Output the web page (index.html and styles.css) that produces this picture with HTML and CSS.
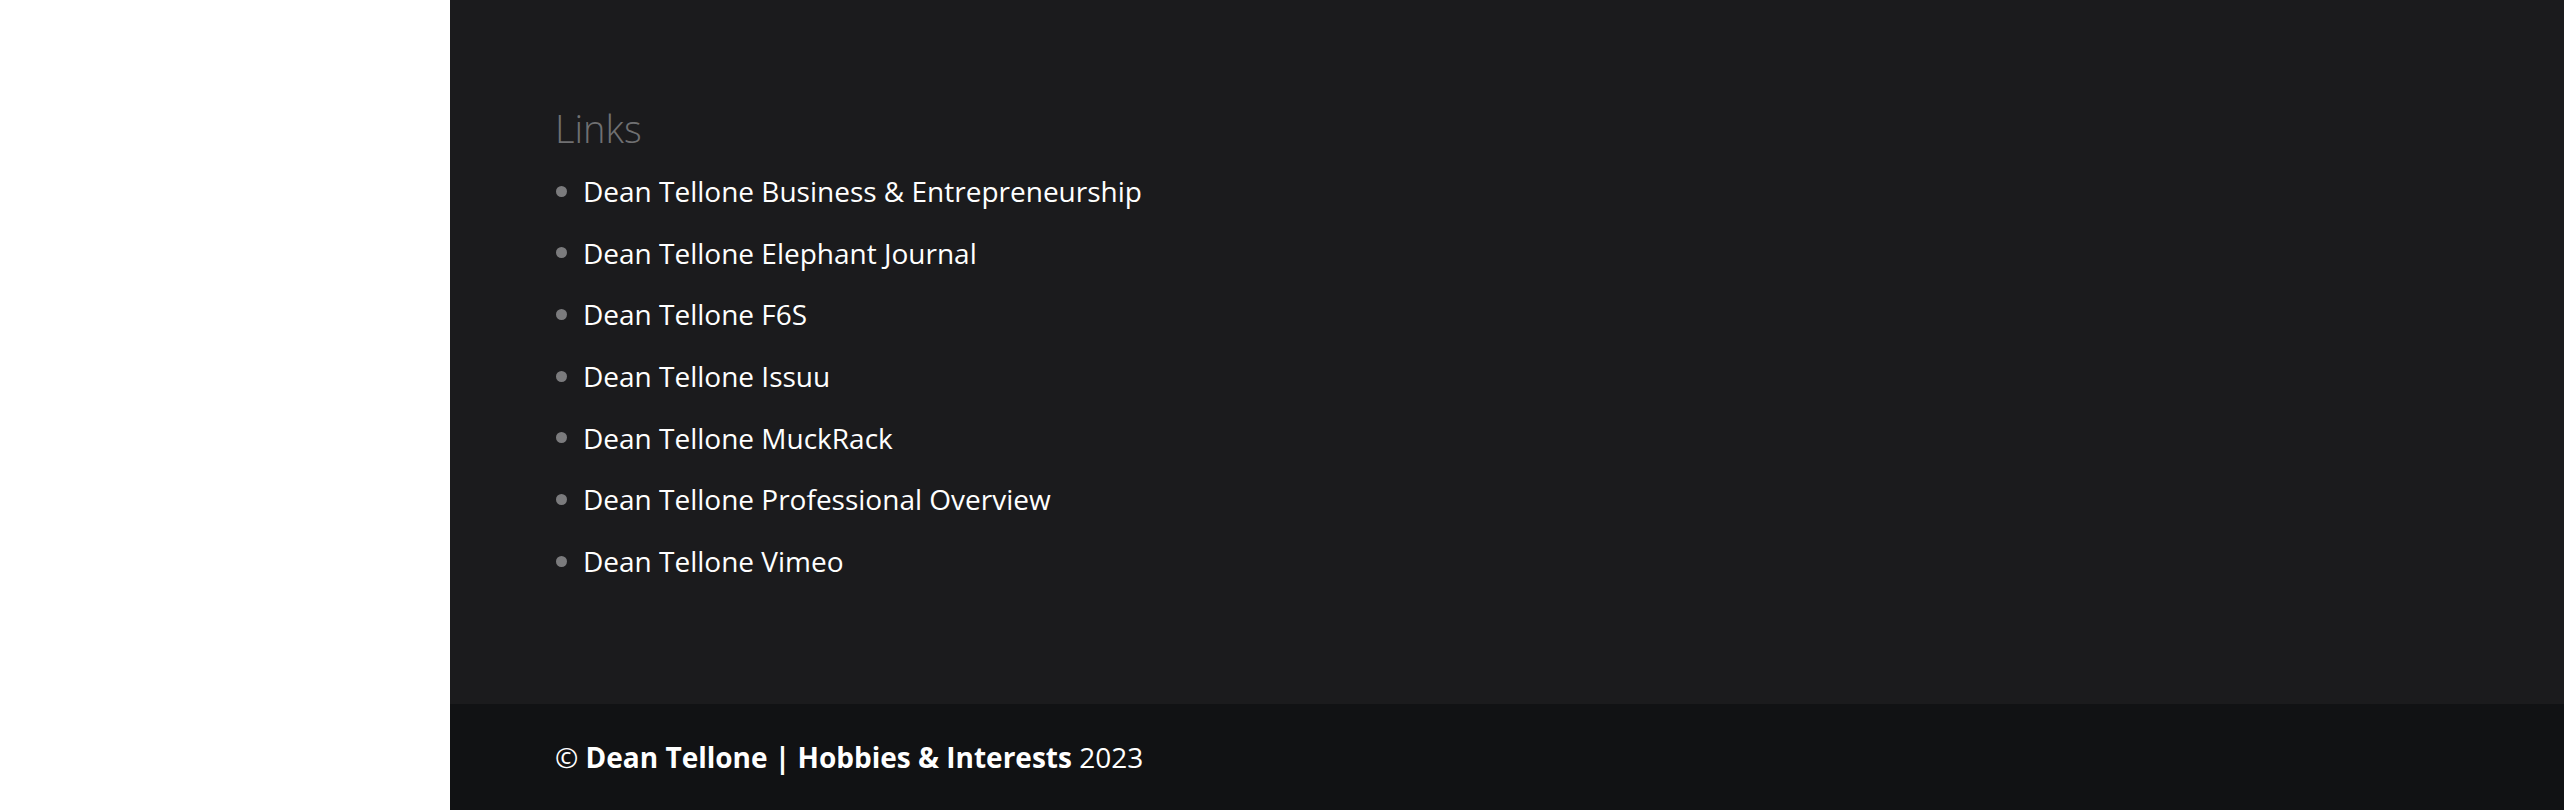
FILE: index.html
```html
<!DOCTYPE html>
<html lang="en">
<head>
  <meta charset="UTF-8" />
  <meta name="viewport" content="width=device-width, initial-scale=1.0"/>
  <title>Dean Tellone | Hobbies &amp; Interests</title>
  <link rel="stylesheet" href="styles.css">
</head>
<body>
  <div class="side-space"></div>
  <footer class="site-footer">
    <div class="footer-main">
      <h4 class="widget-title">Links</h4>
      <ul class="link-list">
        <li><a href="#">Dean Tellone Business &amp; Entrepreneurship</a></li>
        <li><a href="#">Dean Tellone Elephant Journal</a></li>
        <li><a href="#">Dean Tellone F6S</a></li>
        <li><a href="#">Dean Tellone Issuu</a></li>
        <li><a href="#">Dean Tellone MuckRack</a></li>
        <li><a href="#">Dean Tellone Professional Overview</a></li>
        <li><a href="#">Dean Tellone Vimeo</a></li>
      </ul>
    </div>
    <div class="footer-bottom">
      <p>&copy; <strong>Dean Tellone | Hobbies &amp; Interests</strong> 2023</p>
    </div>
  </footer>
</body>
</html>
```

FILE: styles.css
```css
body {
  margin: 0;
  font-family: 'Open Sans', 'Noto Sans', Arial, sans-serif;
  display: flex;
  background-color: #fff;
}
.side-space {
  width: 450px;
  flex-shrink: 0;
}
.site-footer {
  flex: 1;
  display: flex;
  flex-direction: column;
  height: 810px;
}
.footer-main {
  height: 704px;
  box-sizing: border-box;
  padding: 109px 0 0 105px;
  background-color: #1b1b1d;
}
.widget-title {
  margin: 0 0 22px;
  font-size: 38px;
  line-height: 38px;
  font-weight: 300;
  color: #707072;
}
.link-list {
  list-style: none;
  margin: 0;
  padding: 0;
}
.link-list li {
  display: flex;
  align-items: center;
  font-size: 28px;
  line-height: 44px;
  padding-bottom: 17.7px;
}
.link-list li::before {
  content: '';
  width: 11px;
  height: 11px;
  border-radius: 50%;
  background-color: #7b7b7d;
  margin: 0 16px 0 1px;
  flex-shrink: 0;
}
.link-list a {
  color: #fff;
  text-decoration: none;
}
.footer-bottom {
  flex: 1;
  background-color: #111214;
  padding: 35px 0 0 105px;
}
.footer-bottom p {
  margin: 0;
  color: #fff;
  font-size: 28px;
  line-height: 36px;
}
.footer-bottom strong {
  font-weight: 700;
}
```
